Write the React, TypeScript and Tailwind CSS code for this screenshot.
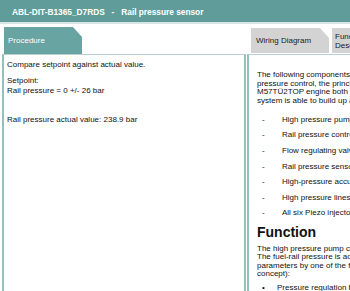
const bullets = [
  'High pressure pump (',
  'Rail pressure control',
  'Flow regulating valve',
  'Rail pressure sensor',
  'High-pressure accumulator',
  'High pressure lines',
  'All six Piezo injectors',
];

export default function App() {
  return (
    <div className="w-[350px] h-[291px] overflow-hidden bg-white flex flex-col font-['Liberation_Sans',Arial,sans-serif] text-[8px] text-[#111]">
      {/* Header */}
      <div className="h-[22px] shrink-0 bg-[#609d9a] flex items-center pl-[12px] pt-[3px] text-white font-bold text-[8.3px] whitespace-nowrap">
        ABL-DIT-B1365_D7RDS{'\u00a0\u00a0\u00a0-\u00a0\u00a0\u00a0'}Rail pressure sensor
      </div>
      <div className="h-[2px] shrink-0 bg-[#d7e5e4]" />

      {/* Tabs */}
      <div className="flex shrink-0 mt-[3px] h-[27px] items-stretch">
        <div className="ml-[4px] w-[78px] bg-[#68a4a1] text-white flex items-center pl-[4px] pt-[1px] [clip-path:polygon(0_0,calc(100%-9px)_0,100%_10px,100%_100%,0_100%)]">
          Procedure
        </div>
        <div className="ml-[169px] w-[78px] mb-[1px] mt-[1px] bg-[#d3d3d3] text-[#222] flex items-center pl-[5px] [clip-path:polygon(0_0,calc(100%-9px)_0,100%_10px,100%_100%,0_100%)]">
          Wiring Diagram
        </div>
        <div className="ml-[3px] flex-1 mb-[1px] mt-[1px] bg-[#d3d3d3] text-[#222] flex flex-col justify-center pl-[3px] leading-[9px] whitespace-nowrap overflow-hidden">
          <span>Function</span>
          <span>Description</span>
        </div>
      </div>

      {/* Panels */}
      <div className="flex flex-1 min-h-0 gap-[1px]">
        <div className="ml-[2px] w-[244px] shrink-0 border-x-2 border-[#93bfbd] border-t border-t-[#b8cfce] pl-[3px] pt-[5px] leading-[10px]">
          <p>Compare setpoint against actual value.</p>
          <p className="mt-[6px]">Setpoint:</p>
          <p>Rail pressure = 0 +/- 26 bar</p>
          <p className="mt-[19px]">Rail pressure actual value: 238.9 bar</p>
        </div>
        <div className="flex-1 min-w-0 overflow-hidden border-l-2 border-[#93bfbd] border-t border-t-[#b8cfce] pl-[8px] pt-[16px] whitespace-nowrap">
          <p className="leading-[8.5px]">
            The following components belong to the rail
            <br />
            pressure control, the principle is used in the
            <br />
            M57TÜ2TOP engine both with the
            <br />
            system is able to build up and maintain
          </p>
          <ul className="mt-[7px]">
            {bullets.map((b) => (
              <li key={b} className="flex h-[15.6px] items-center">
                <span className="w-[25px] shrink-0 pl-[5px]">-</span>
                <span>{b}</span>
              </li>
            ))}
          </ul>
          <h2 className="mt-[2px] font-bold text-[14px] leading-[18px]">Function</h2>
          <p className="mt-[4px] leading-[8.2px]">
            The high pressure pump conveys fuel
            <br />
            The fuel-rail pressure is adjusted
            <br />
            parameters by one of the following
            <br />
            concept):
          </p>
          <ul className="mt-[4px]">
            <li className="flex items-center">
              <span className="w-[20px] shrink-0 pl-[5px]">•</span>
              <span>Pressure regulation by</span>
            </li>
          </ul>
        </div>
      </div>
    </div>
  );
}
